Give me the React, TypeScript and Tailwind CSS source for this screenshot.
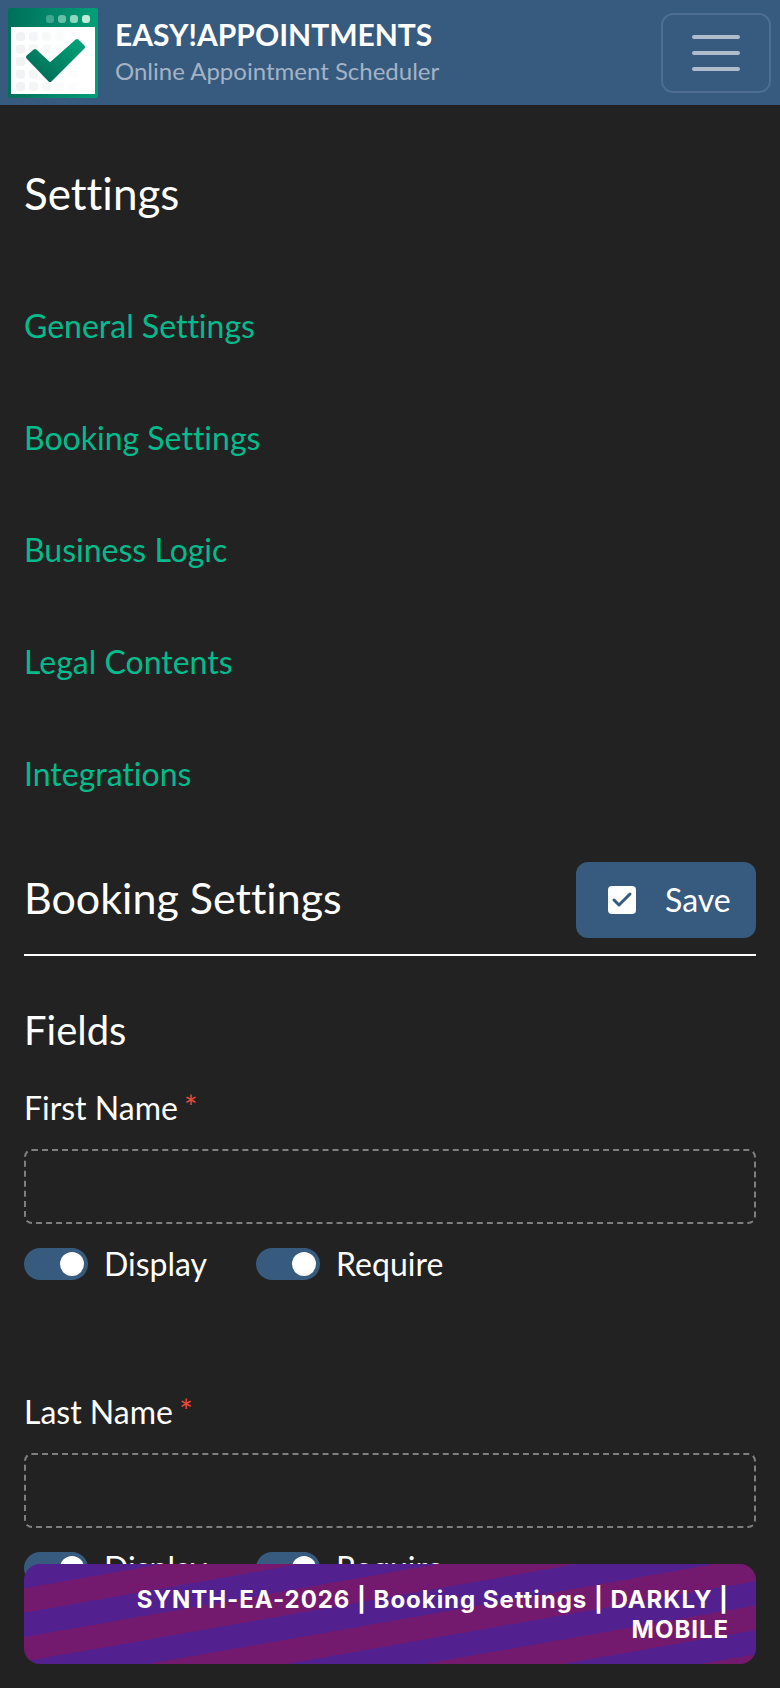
import { Check } from "lucide-react";

const LINKS = ["General Settings", "Booking Settings", "Business Logic", "Legal Contents", "Integrations"];

function Logo() {
  const cells = [];
  for (let r = 0; r < 5; r++) {
    for (let c = 0; c < 5; c++) {
      cells.push(<rect key={`${r}-${c}`} x={8 + c * 13} y={24 + r * 12.5} width="9" height="9" rx="3" fill="#f1f2f3" opacity={1 - c * 0.22} />);
    }
  }
  return (
    <svg width="90" height="90" viewBox="0 0 90 90" className="shrink-0">
      <defs>
        <linearGradient id="lg" x1="0" y1="1" x2="1" y2="0">
          <stop offset="0" stopColor="#006652" />
          <stop offset="1" stopColor="#00a578" />
        </linearGradient>
        <linearGradient id="tg" x1="0" y1="0" x2="1" y2="0">
          <stop offset="0" stopColor="#006f5a" />
          <stop offset="1" stopColor="#00a078" />
        </linearGradient>
      </defs>
      <rect x="0" y="0" width="90" height="90" rx="2" fill="url(#tg)" />
      <rect x="3" y="19" width="84" height="67" fill="#fff" />
      {cells}
      <rect x="38" y="7" width="8" height="8" rx="3" fill="#3fa78f" />
      <rect x="50" y="7" width="8" height="8" rx="3" fill="#66bfa6" />
      <rect x="62" y="7" width="8" height="8" rx="3" fill="#8fd6bf" />
      <rect x="74" y="7" width="8" height="8" rx="3" fill="#c0ecd9" />
      <path d="M20 49 L27 43 L42 57 L69 33 L75 39 L42 72 Z" fill="url(#lg)" stroke="url(#lg)" strokeWidth="4" strokeLinejoin="round" />
    </svg>
  );
}

function Toggle({ label }: { label: string }) {
  return (
    <div className="flex items-center gap-[16px]">
      <div className="flex h-8 w-16 items-center justify-end rounded-full bg-[#375a7f] pr-1">
        <div className="size-6 rounded-full bg-white" />
      </div>
      <span className="text-[32px] leading-[36px] text-white">{label}</span>
    </div>
  );
}

function Field({ label }: { label: string }) {
  return (
    <div className="mb-[112px]">
      <label className="block text-[32px] leading-[36px] text-white">
        {label} <span className="relative -top-[1px] -ml-[2px] text-[32px] text-[#e74c3c]">*</span>
      </label>
      <div className="mt-[23px] h-[75px] rounded-lg border-2 border-dashed border-[#7f7f7f]" />
      <div className="mt-[22px] flex gap-[49px]">
        <Toggle label="Display" />
        <Toggle label="Require" />
      </div>
    </div>
  );
}

export default function App() {
  return (
    <div className="relative h-[1688px] overflow-hidden bg-[#222222] font-['Lato','Liberation_Sans',sans-serif] [font-variant-ligatures:none]">
      <header className="flex h-[105px] items-center justify-between bg-[#375a7f] pl-[8px] pr-[9px]">
        <div className="flex items-center gap-[17px]">
          <Logo />
          <div className="mt-[1px]">
            <div className="text-[30px] font-bold leading-[36px] text-white">EASY!APPOINTMENTS</div>
            <div className="text-[24px] leading-[38px] text-[#a3b3c5]">Online Appointment Scheduler</div>
          </div>
        </div>
        <div className="flex h-[80px] w-[110px] flex-col items-center justify-center gap-[12px] rounded-xl border-2 border-[#4d6d91]">
          <span className="h-[4px] w-12 rounded-full bg-[#afbccb]" />
          <span className="h-[4px] w-12 rounded-full bg-[#afbccb]" />
          <span className="h-[4px] w-12 rounded-full bg-[#afbccb]" />
        </div>
      </header>

      <main className="px-6">
        <h1 className="mt-[64px] text-[44px] leading-[48px] text-white">Settings</h1>
        <nav className="mt-[53px] flex flex-col">
          {LINKS.map((l) => (
            <a key={l} className="flex h-[112px] items-center text-[32px] text-[#00bc8c]">
              {l}
            </a>
          ))}
        </nav>

        <div className="mt-[32px] flex items-center justify-between border-b-2 border-white pb-[16px]">
          <h2 className="mb-[4px] text-[43px] leading-[52px] text-white">Booking Settings</h2>
          <button className="flex h-[76px] w-[180px] items-center gap-[29px] rounded-xl bg-[#375a7f] pl-8 text-[32px] text-white">
            <span className="flex size-7 items-center justify-center rounded bg-white">
              <Check size={24} strokeWidth={3} className="text-[#375a7f]" />
            </span>
            Save
          </button>
        </div>

        <h3 className="mt-[51px] text-[40px] leading-[46px] text-white">Fields</h3>
        <div className="mt-[37px]">
          <Field label="First Name" />
          <Field label="Last Name" />
        </div>
      </main>

      <div className="absolute bottom-6 left-6 right-6 flex h-[100px] items-center justify-end rounded-2xl bg-[repeating-linear-gradient(170deg,#52218f_0px,#52218f_24px,#741a6e_24px,#741a6e_48px)] pl-[30px] pr-[27px] pt-[2px] text-right font-['Inter',sans-serif] text-[24px] font-bold leading-[30px] tracking-[0.96px] text-white">
        <span>SYNTH-EA-2026 | Booking Settings | DARKLY | MOBILE</span>
      </div>
    </div>
  );
}
